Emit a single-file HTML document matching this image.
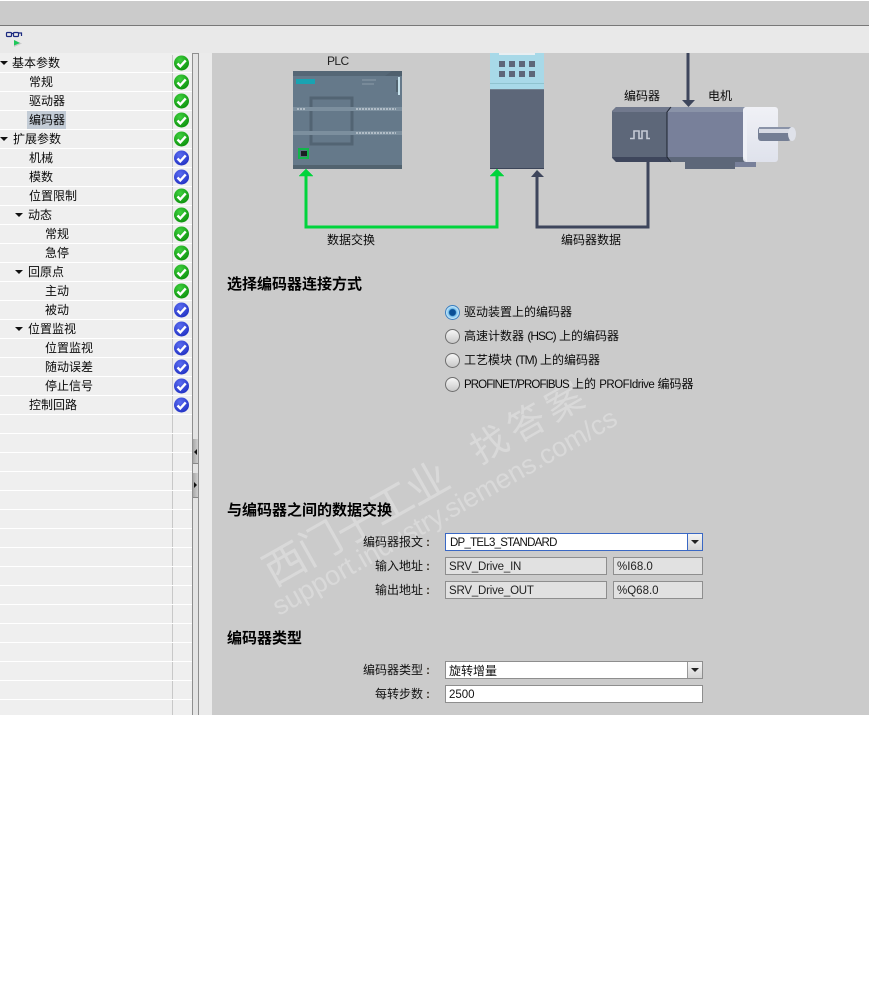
<!DOCTYPE html>
<html><head><meta charset="utf-8"><style>
html,body{margin:0;padding:0;background:#fff}
body{width:869px;height:992px;position:relative;overflow:hidden;font-family:"Liberation Sans","Noto Sans CJK SC",sans-serif;font-size:12px;color:#000}
.a{position:absolute}
.t{position:absolute;white-space:nowrap;line-height:19px;font-size:12px;font-family:"Liberation Sans","WenQuanYi Zen Hei","Noto Sans CJK SC",sans-serif;color:#0a0a0a}
.row{position:absolute;left:0;width:192px;height:1px;background:#fff}
.tri{position:absolute;width:0;height:0;border-left:4px solid transparent;border-right:4px solid transparent;border-top:4px solid #111}
.h{position:absolute;white-space:nowrap;font-size:15px;font-weight:bold;line-height:20px;left:227px;color:#000;font-family:"Liberation Sans","WenQuanYi Zen Hei","Noto Sans CJK SC",sans-serif}
.f{position:absolute;box-sizing:border-box;height:18px;border:1px solid #8e8e8e;background:#e1e1e1;line-height:18px;padding-left:3px;font-size:11.5px;color:#222;white-space:nowrap}
.l{position:absolute;white-space:nowrap;text-align:right;right:446px;line-height:18px;font-size:12px;color:#111;font-family:"Liberation Sans","WenQuanYi Zen Hei","Noto Sans CJK SC",sans-serif}
.c{position:absolute;left:426px;line-height:18px;font-size:12px;font-weight:bold;color:#3a3226}
.dd{position:absolute;left:687px;width:15px;height:16px;background:linear-gradient(#f4f4f4,#d4d4d4);border-left:1px solid #999;box-sizing:border-box}
.dd:after{content:"";position:absolute;left:3px;top:6px;border-left:4px solid transparent;border-right:4px solid transparent;border-top:4px solid #222}
.r{position:absolute;left:445px;width:15px;height:15px;box-sizing:border-box;border-radius:50%;border:1px solid #6e6e6e;background:linear-gradient(#f6f6f6,#c9c9c9)}
.wm{position:absolute;white-space:nowrap;color:#fff;transform-origin:0 0;transform:rotate(-29.5deg);opacity:.28}
svg{position:absolute;left:0;top:0}
</style></head><body>
<div class="a" style="left:0;top:1px;width:869px;height:24px;background:#cbcbcb"></div>
<div class="a" style="left:0;top:25px;width:869px;height:1px;background:#787878"></div>
<div class="a" style="left:0;top:26px;width:869px;height:27px;background:#e9e9e9"></div>
<div class="a" style="left:0;top:53px;width:192px;height:662px;background:#efefef"></div>
<div class="a" style="left:172px;top:55px;width:1px;height:660px;background:#c8c8c8"></div>
<div class="a" style="left:192px;top:53px;width:1px;height:662px;background:#8f8f8f"></div>
<div class="a" style="left:193px;top:53px;width:5px;height:662px;background:#e4e4e4"></div>
<div class="a" style="left:198px;top:53px;width:1px;height:662px;background:#8f8f8f"></div>
<div class="a" style="left:193px;top:53px;width:5px;height:1px;background:#8f8f8f"></div>
<div class="a" style="left:199px;top:53px;width:13px;height:662px;background:#ebebeb"></div>
<div class="a" style="left:212px;top:53px;width:657px;height:662px;background:#cbcbcb"></div>
<div class="a" style="left:193px;top:439px;width:5px;height:24px;background:linear-gradient(90deg,#a8a8a8,#cfcfcf);border-bottom:1px solid #888"></div>
<div class="a" style="left:193px;top:473px;width:5px;height:24px;background:linear-gradient(90deg,#a8a8a8,#cfcfcf);border-bottom:1px solid #888"></div>
<div class="a" style="left:194px;top:449px;border-top:3px solid transparent;border-bottom:3px solid transparent;border-right:3px solid #111"></div>
<div class="a" style="left:194px;top:482px;border-top:3px solid transparent;border-bottom:3px solid transparent;border-left:3px solid #111"></div>

<div class="row" style="top:72px"></div><div class="row" style="top:91px"></div><div class="row" style="top:110px"></div><div class="row" style="top:129px"></div><div class="row" style="top:148px"></div><div class="row" style="top:167px"></div><div class="row" style="top:186px"></div><div class="row" style="top:205px"></div><div class="row" style="top:224px"></div><div class="row" style="top:243px"></div><div class="row" style="top:262px"></div><div class="row" style="top:281px"></div><div class="row" style="top:300px"></div><div class="row" style="top:319px"></div><div class="row" style="top:338px"></div><div class="row" style="top:357px"></div><div class="row" style="top:376px"></div><div class="row" style="top:395px"></div><div class="row" style="top:414px"></div><div class="row" style="top:433px"></div><div class="row" style="top:452px"></div><div class="row" style="top:471px"></div><div class="row" style="top:490px"></div><div class="row" style="top:509px"></div><div class="row" style="top:528px"></div><div class="row" style="top:547px"></div><div class="row" style="top:566px"></div><div class="row" style="top:585px"></div><div class="row" style="top:604px"></div><div class="row" style="top:623px"></div><div class="row" style="top:642px"></div><div class="row" style="top:661px"></div><div class="row" style="top:680px"></div><div class="row" style="top:699px"></div>

<div class="a" style="left:27px;top:111px;width:39px;height:18px;background:#c3ccd6"></div>

<div class="tri" style="left:0;top:61px"></div><div class="t" style="left:12px;top:54px">基本参数</div>
<div class="t" style="left:29px;top:73px">常规</div>
<div class="t" style="left:29px;top:92px">驱动器</div>
<div class="t" style="left:29px;top:111px">编码器</div>
<div class="tri" style="left:0;top:137px"></div><div class="t" style="left:13px;top:130px">扩展参数</div>
<div class="t" style="left:29px;top:149px">机械</div>
<div class="t" style="left:29px;top:168px">模数</div>
<div class="t" style="left:29px;top:187px">位置限制</div>
<div class="tri" style="left:15px;top:213px"></div><div class="t" style="left:28px;top:206px">动态</div>
<div class="t" style="left:45px;top:225px">常规</div>
<div class="t" style="left:45px;top:244px">急停</div>
<div class="tri" style="left:15px;top:270px"></div><div class="t" style="left:28px;top:263px">回原点</div>
<div class="t" style="left:45px;top:282px">主动</div>
<div class="t" style="left:45px;top:301px">被动</div>
<div class="tri" style="left:15px;top:327px"></div><div class="t" style="left:28px;top:320px">位置监视</div>
<div class="t" style="left:45px;top:339px">位置监视</div>
<div class="t" style="left:45px;top:358px">随动误差</div>
<div class="t" style="left:45px;top:377px">停止信号</div>
<div class="t" style="left:29px;top:396px">控制回路</div>

<svg width="869" height="992" viewBox="0 0 869 992">
<defs>
<radialGradient id="g" cx=".4" cy=".3" r=".8"><stop offset="0" stop-color="#3fd03f"/><stop offset="1" stop-color="#078c07"/></radialGradient>
<radialGradient id="b" cx=".4" cy=".3" r=".8"><stop offset="0" stop-color="#5a6cf0"/><stop offset="1" stop-color="#1c2cc0"/></radialGradient>
<linearGradient id="w" x1="0" y1="0" x2="0" y2="1"><stop offset="0" stop-color="#f0f1f6"/><stop offset="1" stop-color="#dfe2ec"/></linearGradient>
<g id="ck"><path d="M-4 0.5L-1.2 3.4L4.2 -2.6" fill="none" stroke="#fff" stroke-width="2.4"/></g>
</defs>
<g fill="url(#g)">
<circle cx="181.500" cy="63" r="7.500"/><circle cx="181.500" cy="82" r="7.500"/><circle cx="181.500" cy="101" r="7.500"/><circle cx="181.500" cy="120" r="7.500"/><circle cx="181.500" cy="139" r="7.500"/>
<circle cx="181.500" cy="196" r="7.500"/><circle cx="181.500" cy="215" r="7.500"/><circle cx="181.500" cy="234" r="7.500"/><circle cx="181.500" cy="253" r="7.500"/><circle cx="181.500" cy="272" r="7.500"/><circle cx="181.500" cy="291" r="7.500"/>
</g>
<g fill="url(#b)">
<circle cx="181.500" cy="158" r="7.500"/><circle cx="181.500" cy="177" r="7.500"/><circle cx="181.500" cy="310" r="7.500"/><circle cx="181.500" cy="329" r="7.500"/><circle cx="181.500" cy="348" r="7.500"/><circle cx="181.500" cy="367" r="7.500"/><circle cx="181.500" cy="386" r="7.500"/><circle cx="181.500" cy="405" r="7.500"/>
</g>
<use href="#ck" x="181.500" y="63"/><use href="#ck" x="181.500" y="82"/><use href="#ck" x="181.500" y="101"/><use href="#ck" x="181.500" y="120"/><use href="#ck" x="181.500" y="139"/><use href="#ck" x="181.500" y="158"/><use href="#ck" x="181.500" y="177"/><use href="#ck" x="181.500" y="196"/><use href="#ck" x="181.500" y="215"/><use href="#ck" x="181.500" y="234"/><use href="#ck" x="181.500" y="253"/><use href="#ck" x="181.500" y="272"/><use href="#ck" x="181.500" y="291"/><use href="#ck" x="181.500" y="310"/><use href="#ck" x="181.500" y="329"/><use href="#ck" x="181.500" y="348"/><use href="#ck" x="181.500" y="367"/><use href="#ck" x="181.500" y="386"/><use href="#ck" x="181.500" y="405"/>

<!-- toolbar icon -->
<g fill="none" stroke="#1c2a80" stroke-width="1.200"><rect x="6.500" y="32.500" width="5" height="4" rx="1"/><rect x="13.500" y="32.500" width="5" height="4" rx="1"/><path d="M11.500 33.500H13.500M18.500 33H21.500V36"/></g>
<path d="M14 40L22 43.500L14 47Z" fill="#c9c9c9"/><path d="M14 40L20 43L14 45.500Z" fill="#1ec85a"/>

<!-- PLC -->
<rect x="293" y="71" width="109" height="98" fill="#65798a"/>
<rect x="293" y="71" width="109" height="5" fill="#556776"/>
<path d="M385 76L392 71H402V76Z" fill="#4f606e"/>
<rect x="293" y="165" width="109" height="4" fill="#52636f"/>
<rect x="296" y="79" width="19" height="5" fill="#19a3b2"/>
<rect x="311" y="98" width="41" height="46" fill="none" stroke="#526473" stroke-width="3"/>
<rect x="293" y="107" width="109" height="4" fill="#7c8f9e"/>
<rect x="293" y="131" width="109" height="4" fill="#7c8f9e"/>
<rect x="398" y="77" width="2" height="18" fill="#c7e2ec"/>
<rect x="396" y="80" width="2" height="12" fill="#52636f"/>
<path d="M362 80H376M362 84H374" stroke="#7f909e" stroke-width="1.500" fill="none"/>
<path d="M297 109H305M356 109H396M356 133H396" stroke="#c2ccd4" stroke-width="1.500" stroke-dasharray="2 1" fill="none"/>
<rect x="298" y="148" width="11" height="11" fill="#12b64a"/>
<rect x="300" y="150" width="7" height="7" fill="#5c6f7f"/>
<rect x="301" y="151" width="6" height="5" fill="#1b1f22"/>

<!-- Drive -->
<rect x="490" y="53" width="54" height="36" fill="#a8d9e8"/>
<rect x="499" y="53" width="36" height="2" fill="#e9eff2"/>
<rect x="490" y="83" width="54" height="1" fill="#8fc3cf"/>
<rect x="490" y="90" width="54" height="79" fill="#5d6779"/>
<rect x="490" y="89" width="54" height="1" fill="#71808e"/>
<rect x="490" y="168" width="54" height="1" fill="#3c4559"/>
<g fill="#5d6779"><rect x="499" y="61" width="6" height="6"/><rect x="509" y="61" width="6" height="6"/><rect x="519" y="61" width="6" height="6"/><rect x="529" y="61" width="6" height="6"/><rect x="499" y="71" width="6" height="6"/><rect x="509" y="71" width="6" height="6"/><rect x="519" y="71" width="6" height="6"/><rect x="529" y="71" width="6" height="6"/></g>

<!-- green connection -->
<path d="M306 176V227H497V176" fill="none" stroke="#00d43c" stroke-width="3"/>
<path d="M299 176L306 169L313 176Z M490 176L497 169L504 176Z" fill="#00d43c" stroke="#00d43c" stroke-width=".5"/>
<!-- dark connection -->
<path d="M537 176V227H648V162" fill="none" stroke="#3e465c" stroke-width="3"/>
<path d="M531 177L537 170L544 177Z" fill="#3e465c"/>
<path d="M688 53V102" stroke="#3e465c" stroke-width="3"/>
<path d="M682 100H695L688.500 107Z" fill="#3e465c"/>

<!-- Motor -->
<rect x="685" y="160" width="50" height="9" fill="#5d6779"/>
<rect x="735" y="160" width="21" height="7" fill="#78809a"/>
<path d="M616 107H670V162H616L612 158V111Z" fill="#5d6779"/>
<path d="M612 112L616 107H670L667 112Z" fill="#71798d"/>
<path d="M612 157H667L670 162H616Z" fill="#3e465c"/>
<path d="M667 112L671 107H745V162H671L667 157Z" fill="#78809a"/>
<path d="M667 112L671 107H745V112Z" fill="#8a93a8"/>
<path d="M667 157H745V162H671Z" fill="#5d6779"/>
<path d="M671 107L667 112V157L671 162" fill="none" stroke="#1d2330" stroke-width="1"/>
<path d="M743 112H749V162H745L743 157Z" fill="#5d6779"/>
<rect x="743" y="107" width="35" height="55" rx="3" fill="url(#w)"/>
<path d="M743 112L747 107V162L743 157Z" fill="#eef0f6"/>
<path d="M630 138.500H634V131H639V138.500H642V131H647V138.500H650" fill="none" stroke="#c4c9d4" stroke-width="1.600"/>
<rect x="758" y="127" width="33" height="14" rx="3" fill="#747e94"/>
<rect x="759" y="127" width="32" height="2" fill="#8a93a8"/>
<rect x="759" y="129" width="32" height="4" fill="#d8dbe4"/>
<ellipse cx="792" cy="134" rx="4" ry="7" fill="#dfe2ea"/>
</svg>

<div class="t" style="left:327px;top:52px;color:#222;font-size:12px;letter-spacing:-.6px">PLC</div>
<div class="t" style="left:624px;top:87px">编码器</div>
<div class="t" style="left:708px;top:87px">电机</div>
<div class="t" style="left:327px;top:231px">数据交换</div>
<div class="t" style="left:561px;top:231px">编码器数据</div>

<div class="wm" style="left:255px;top:554px;font-size:42px;letter-spacing:-1px;font-family:'Noto Sans CJK SC',sans-serif;line-height:1">西门子工业</div>
<div class="wm" style="left:463px;top:435px;font-size:37px;letter-spacing:6px;font-family:'Noto Sans CJK SC',sans-serif;line-height:1">找答案</div>
<div class="wm" style="left:268px;top:597px;font-size:27px;line-height:1;font-family:'Liberation Sans',sans-serif">support.industry.siemens.com/cs</div>

<div class="h" style="top:275px">选择编码器连接方式</div>
<div class="h" style="top:501px">与编码器之间的数据交换</div>
<div class="h" style="top:629px">编码器类型</div>

<div class="r" style="top:305px;border-color:#3a7fc0;background:radial-gradient(circle,#0a4f96 0 3px,#79c2ee 4px,#dff1fb 7px)"></div>
<div class="r" style="top:329px"></div>
<div class="r" style="top:353px"></div>
<div class="r" style="top:377px"></div>
<div class="t" style="left:464px;top:303px">驱动装置上的编码器</div>
<div class="t" style="left:464px;top:327px">高速计数器 <span style="letter-spacing:-1px">(HSC)</span> 上的编码器</div>
<div class="t" style="left:464px;top:351px">工艺模块 <span style="letter-spacing:-1px">(TM)</span> 上的编码器</div>
<div class="t" style="left:464px;top:375px;font-size:11.500px"><span style="letter-spacing:-.9px">PROFINET/PROFIBUS</span> <span style="font-size:12px">上的</span> <span style="letter-spacing:-.5px">PROFIdrive</span> <span style="font-size:12px">编码器</span></div>

<div class="l" style="top:533px">编码器报文</div><div class="c" style="top:533px">:</div>
<div class="l" style="top:557px">输入地址</div><div class="c" style="top:557px">:</div>
<div class="l" style="top:581px">输出地址</div><div class="c" style="top:581px">:</div>
<div class="l" style="top:661px">编码器类型</div><div class="c" style="top:661px">:</div>
<div class="l" style="top:685px">每转步数</div><div class="c" style="top:685px">:</div>

<div class="f" style="left:445px;top:533px;width:258px;background:#fff;border-color:#3a68c4;padding-left:4px;color:#111;letter-spacing:-.75px">DP_TEL3_STANDARD</div>
<div class="dd" style="top:534px;border-left:1px solid #3a68c4"></div>
<div class="f" style="left:445px;top:557px;width:162px;letter-spacing:-.2px">SRV_Drive_IN</div>
<div class="f" style="left:613px;top:557px;width:90px">%I68.0</div>
<div class="f" style="left:445px;top:581px;width:162px;letter-spacing:-.2px">SRV_Drive_OUT</div>
<div class="f" style="left:613px;top:581px;width:90px">%Q68.0</div>
<div class="f" style="left:445px;top:661px;width:258px;background:#fff;font-family:'Liberation Sans','WenQuanYi Zen Hei','Noto Sans CJK SC',sans-serif;font-size:12px;color:#111">旋转增量</div>
<div class="dd" style="top:662px"></div>
<div class="f" style="left:445px;top:685px;width:258px;background:#fff;color:#111">2500</div>
</body></html>
